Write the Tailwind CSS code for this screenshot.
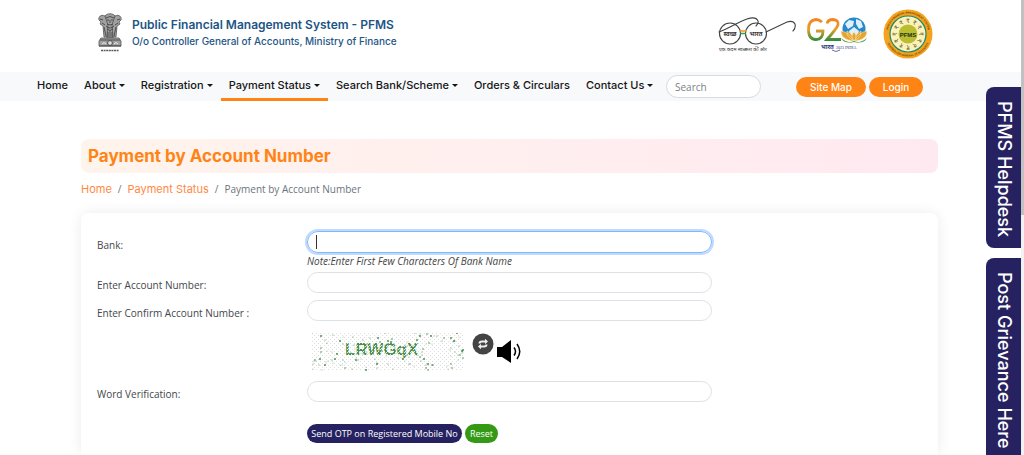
<!DOCTYPE html>
<html lang="en">
<head>
<meta charset="utf-8">
<meta name="viewport" content="width=device-width, initial-scale=1">
<title>PFMS - Payment by Account Number</title>
<script src="https://cdn.jsdelivr.net/npm/@tailwindcss/browser@4"></script>
</head>
<body class="relative flex h-screen flex-col overflow-hidden bg-white pr-[3px] font-['Open_Sans','Noto_Sans',sans-serif] text-[10px] leading-4 text-[#43474b]">

<header class="flex h-[72px] shrink-0 items-start justify-between pr-[88px] pl-[97px]">
  <div class="flex items-start gap-2 pt-[13px]">
    <svg class="h-[40px] w-[26px]" viewBox="0 0 26 40" role="img" aria-label="State Emblem of India">
      <g fill="#a0a0a0" stroke="#555" stroke-width=".8">
        <path d="M8 3c2-3 8-3 10 0l1 6-1 8-2 8h-6l-2-8-1-8z"/>
        <path d="M8 3C4 1 1 4 2 7l2 2-1 2 3 2 1 11h3l1-12z"/>
        <path d="M18 3c4-2 7 1 6 4l-2 2 1 2-3 2-1 11h-3l-1-12z"/>
        <path d="M4 25h18l2 3v5H2v-5z"/>
      </g>
      <g fill="none" stroke="#444" stroke-width=".9">
        <path d="M9 5q4-3 8 0M10 7h2M14 7h2M13 7v3M10 11q3 2 6 0M9 13q4 4 8 0M10 16q3 3 6 0M11 19v5M13 18v6M15 19v5M3 6l3 1M23 6l-3 1M5 10l3 2M21 10l-3 2M7 14l2 9M19 14l-2 9"/>
        <path d="M3 27h20M2 33h22"/>
      </g>
      <circle cx="13" cy="30" r="2.4" fill="#ddd" stroke="#333" stroke-width=".8"/>
      <path d="M5 31q2-3 4 0M17 31q2-3 4 0" fill="none" stroke="#eee" stroke-width="1"/>
      <path d="M4 37.500h18" stroke="#5a5a5a" stroke-width="1.600" stroke-dasharray="2 .6"/>
    </svg>
    <div class="pt-[4px] pl-px text-[#1d5586] font-[Inter,sans-serif]">
      <h1 class="text-[12px] leading-4 font-semibold whitespace-nowrap">Public Financial Management System - PFMS</h1>
      <p class="text-[10px] leading-4 font-medium whitespace-nowrap">O/o Controller General of Accounts, Ministry of Finance</p>
    </div>
  </div>
  <div class="flex items-start pt-[9px]">
    <svg class="h-[50px] w-[80px]" viewBox="0 0 80 50" role="img" aria-label="Swachh Bharat">
      <g fill="none" stroke="#424242" stroke-width="1.100" stroke-linecap="round">
        <circle cx="12" cy="24.500" r="10.500"/><circle cx="38" cy="24.500" r="10.500"/>
        <path d="M1 23C12 19 20 13 29 10Q38 7 40 12Q41 14 38 17M48 23L69 13Q75 11 77 15Q78 19 75 22"/>
      </g>
      <path d="M22 22h6" stroke="#f7931e" stroke-width="1.500"/><path d="M22 24.500h6" stroke="#2f9e44" stroke-width="1.500"/>
      <g fill="#333" font-family="Noto Sans, Noto Sans Devanagari, sans-serif" font-weight="700" text-anchor="middle">
        <text x="12" y="27" font-size="6">स्वच्छ</text><text x="38" y="27" font-size="6">भारत</text>
        <text x="25" y="42" font-size="5" font-weight="400">एक कदम स्वच्छता की ओर</text>
      </g>
    </svg>
    <svg class="ml-[8px] h-[50px] w-[64px]" viewBox="0 0 64 50" role="img" aria-label="G20 Bharat 2023 India">
      <defs>
        <linearGradient id="tri" gradientUnits="userSpaceOnUse" x1="0" x2="0" y1="9" y2="32"><stop offset="0" stop-color="#f58220"/><stop offset=".5" stop-color="#e5a02b"/><stop offset="1" stop-color="#258b3d"/></linearGradient>
      </defs>
      <path d="M16 13Q13 10.500 10 10.500Q2.500 11 2.500 20.500Q2.500 30.500 10 30.500Q17 30.500 17 22H10M21 14.500Q22 10.500 27 10.500Q33 11 32 16Q31 19 21 30.500H35" fill="none" stroke="url(#tri)" stroke-width="2.800"/>
      <circle cx="48" cy="20" r="11.500" fill="#2587cc"/>
      <path d="M39 15l4-4 5 1-1 5-5 3zM50 10l5 2 2 6-4 2-3-5zM43 22l5-4 5 4-3 7h-5z" fill="#e0f0fa"/>
      <g fill="#e6a32e" stroke="#fff3c4" stroke-width=".5">
        <path d="M48 32Q35 31 35 22Q43 23 48 32M48 32Q61 31 61 22Q53 23 48 32M48 32Q40 28 41 22Q47 25 48 32M48 32Q56 28 55 22Q49 25 48 32"/>
        <path d="M48 32Q44 27 48 23Q52 27 48 32"/>
      </g>
      <path d="M35 29q7 6 13 3q6 3 13-3q-3 6-13 4q-10 2-13-4" fill="#3f9945"/>
      <text x="15" y="40" font-family="Noto Sans, Noto Sans Devanagari, sans-serif" font-size="6" font-weight="700" fill="#28347c">भारत</text>
      <text x="30" y="40" font-family="Liberation Serif, serif" font-size="4" fill="#28347c">2023 INDIA</text>
      <path d="M26 41q4 3 8 0" fill="none" stroke="#28347c" stroke-width=".7"/>
    </svg>
    <svg class="ml-[13px] h-[50px] w-[50px]" viewBox="0 0 50 50" role="img" aria-label="PFMS seal">
      <defs><path id="arc-top" d="M4.500 25A20.500 20.500 0 0 1 45.500 25"/><path id="arc-bottom" d="M2.500 25A22.500 22.500 0 0 0 47.500 25"/></defs>
      <circle cx="25" cy="25" r="24.500" fill="#f6a21c"/>
      <circle cx="25" cy="25" r="18" fill="#fcf3bb" stroke="#168b72" stroke-width="1.200"/>
      <g font-family="Liberation Sans, sans-serif" font-size="2.600" font-weight="700" fill="#5a400f" text-anchor="middle">
        <text><textPath href="#arc-top" startOffset="50%">PUBLIC FINANCIAL MANAGEMENT SYSTEM</textPath></text>
        <text><textPath href="#arc-bottom" startOffset="50%">CONTROLLER GENERAL OF ACCOUNTS</textPath></text>
      </g>
      <g id="rupees" fill="#5e5626" font-family="DejaVu Sans, sans-serif" font-size="6" text-anchor="middle"></g>
      <circle cx="25" cy="25" r="9.500" fill="#b9bd2f"/>
      <text x="25" y="27.500" font-family="Liberation Sans, sans-serif" font-size="6" font-weight="700" text-anchor="middle" fill="#25301a">PFMS</text>
    </svg>
  </div>
</header>

<nav class="flex h-[29px] shrink-0 items-center bg-[#f7f9fb] pr-[98px] pl-[29px] font-[Inter,sans-serif]" aria-label="Main">
  <ul class="flex h-full text-[11px] leading-[26px] font-medium whitespace-nowrap text-[#161616]">
    <li><a class="block h-full px-2" href="#">Home</a></li>
    <li><a class="flex h-full items-center gap-[3px] border-b-[3px] border-transparent px-2" href="#">About <i class="border-x-[3px] border-t-[3px] border-x-transparent border-t-[#161616]"></i></a></li>
    <li><a class="flex h-full items-center gap-[3px] border-b-[3px] border-transparent px-2" href="#">Registration <i class="border-x-[3px] border-t-[3px] border-x-transparent border-t-[#161616]"></i></a></li>
    <li><a class="flex h-full items-center gap-[3px] border-b-[3px] border-[#ff8416] px-2" href="#" aria-current="page">Payment Status <i class="border-x-[3px] border-t-[3px] border-x-transparent border-t-[#161616]"></i></a></li>
    <li><a class="flex h-full items-center gap-[3px] border-b-[3px] border-transparent px-2" href="#">Search Bank/Scheme <i class="border-x-[3px] border-t-[3px] border-x-transparent border-t-[#161616]"></i></a></li>
    <li><a class="block h-full px-2" href="#">Orders &amp; Circulars</a></li>
    <li><a class="flex h-full items-center gap-[3px] border-b-[3px] border-transparent px-2" href="#">Contact Us <i class="border-x-[3px] border-t-[3px] border-x-transparent border-t-[#161616]"></i></a></li>
  </ul>
  <div class="ml-auto flex items-center">
    <input class="h-[23px] w-[95px] rounded-full border border-[#d5dbe1] bg-white px-2 font-['Open_Sans',sans-serif] text-[10px] placeholder:text-[#7b8289]" type="search" aria-label="Search" placeholder="Search">
    <button class="ml-[35px] h-5 w-[70px] rounded-full bg-[#ff8416] text-[10px] leading-4 font-medium text-white">Site Map</button>
    <button class="ml-[3px] h-5 w-[54px] rounded-full bg-[#ff8416] text-[10px] leading-4 font-medium text-white">Login</button>
  </div>
</nav>

<main class="flex min-h-0 flex-1 flex-col pt-[38px] pr-[83px] pl-[81px]">
  <h2 class="h-[34px] shrink-0 rounded-lg bg-linear-to-r from-[#fff4ec] to-[#ffe9f1] px-[7px] font-[Inter,sans-serif] text-[17px] leading-[34px] font-bold text-[#ff8416]">Payment by Account Number</h2>
  <nav class="mt-2 flex gap-[6px] leading-4 text-[#6c757d]" aria-label="Breadcrumb">
    <a class="font-[Inter,sans-serif] text-[11px] text-[#ff8844]" href="#">Home</a><span>/</span>
    <a class="font-[Inter,sans-serif] text-[11px] text-[#ff8844]" href="#">Payment Status</a><span>/</span>
    <span aria-current="page">Payment by Account Number</span>
  </nav>

  <form class="mt-[16px] grid flex-1 grid-cols-[210px_minmax(0,405px)] content-start rounded-t-lg bg-white px-4 pt-[18px] shadow-[0_0_14px_rgba(0,0,0,0.08)]">
    <label class="pt-[6px]" for="bank">Bank:</label>
    <div class="relative h-[41px]">
      <input id="bank" class="block h-[22px] w-full rounded-full border border-[#80b5ff] px-2 text-[14px] caret-transparent ring-2 ring-[#bfdaff] outline-none" type="text" autofocus>
      <span class="absolute top-1 left-[9px] h-[14px] w-px bg-[#333]" aria-hidden="true"></span>
      <p class="leading-4 text-[#454545] italic">Note:Enter First Few Characters Of Bank Name</p>
    </div>
    <label class="pt-[5px]" for="account">Enter Account Number:</label>
    <div class="h-7"><input id="account" class="block h-[21px] w-full rounded-full border border-[#dde1e6] px-2 outline-none" type="text"></div>
    <label class="pt-[5px]" for="confirm">Enter Confirm Account Number :</label>
    <div class="h-[33px]"><input id="confirm" class="block h-[21px] w-full rounded-full border border-[#dde1e6] px-2 outline-none" type="text"></div>
    <div class="col-start-2 flex h-[48px] items-start pl-[5px]">
      <svg class="h-[38px] w-[152px]" viewBox="0 0 152 38" role="img" aria-label="Captcha LRWGqX">
        <defs><pattern id="mesh" width="4" height="4" patternUnits="userSpaceOnUse"><path d="M0 0h1v1H0zM2 2h1v1H2z" fill="#dedede"/></pattern>
        <pattern id="hatch" width="3" height="3" patternUnits="userSpaceOnUse"><rect width="3" height="3" fill="#4b8d4e"/><path d="M0 0h1v1H0zM2 1h1v1H2z" fill="#dcebdc"/></pattern></defs>
        <rect width="152" height="38" fill="url(#mesh)"/>
        <g id="specks" fill="#2e7d32"></g>
        <text x="33" y="22" font-family="Liberation Sans, sans-serif" font-size="17" font-weight="700" fill="url(#hatch)">LRWGqX</text>
      </svg>
      <button class="ml-2 h-[22px] w-[22px]" type="button" aria-label="Refresh captcha">
        <svg viewBox="0 0 22 22"><circle cx="11" cy="11" r="10.500" fill="#444"/><path d="M14.500 8.500H10Q7.500 8.500 7.500 10.500M7.500 13.500h4.500Q14.500 13.500 14.500 11.500" fill="none" stroke="#eee" stroke-width="2"/><path d="M13 5.800l3 2.700-3 2.700zM9 10.800l-3 2.700 3 2.700z" fill="#eee"/></svg>
      </button>
      <button class="mt-[7px] ml-[2px] h-6 w-[26px]" type="button" aria-label="Play captcha audio">
        <svg viewBox="0 0 26 24"><path d="M1 7h5l9-7v23l-9-6H1z" fill="#000"/><path d="M18 7.500q3 4 0 8M21 4q5.500 7.500 0 15" fill="none" stroke="#000" stroke-width="1.500"/></svg>
      </button>
    </div>
    <label class="pt-[5px]" for="word">Word Verification:</label>
    <div class="h-[42px]"><input id="word" class="block h-[21px] w-full rounded-full border border-[#dde1e6] px-2 outline-none" type="text"></div>
    <div class="col-start-2 flex gap-[3px] pt-px text-white">
      <button class="h-[19px] w-[155px] rounded-full bg-[#262261] text-[9px] leading-4 whitespace-nowrap" type="button">Send OTP on Registered Mobile No</button>
      <button class="h-[19px] w-[33px] rounded-full bg-[#349914] text-[9px] leading-4" type="reset">Reset</button>
    </div>
  </form>
</main>

<aside class="absolute top-[87px] right-[3px] bottom-0 flex flex-col gap-[10px] font-[Inter,sans-serif] text-[18px] leading-[34px] font-medium whitespace-nowrap text-white" aria-label="Help">
  <a class="h-[161px] w-[35px] shrink-0 rounded-l-lg bg-[#262261] pt-[14px] [writing-mode:vertical-rl]" href="#">PFMS Helpdesk</a>
  <a class="w-[35px] flex-1 rounded-tl-lg bg-[#262261] pt-[14px] [writing-mode:vertical-rl]" href="#">Post Grievance Here</a>
</aside>
<div class="absolute inset-y-0 right-0 w-[3px] bg-[#f1f1f1]" aria-hidden="true"><div class="h-[215px] bg-[#c1c1c1]"></div></div>

<script>
const ns = 'http://www.w3.org/2000/svg';
const ring = document.getElementById('rupees');
for (let a = 0; a < 360; a += 30) {
  const t = document.createElementNS(ns, 'text');
  t.setAttribute('x', 25); t.setAttribute('y', 14);
  t.setAttribute('transform', `rotate(${a} 25 25)`);
  t.textContent = '₹';
  ring.append(t);
}
const specks = document.getElementById('specks');
let seed = 29;
const next = n => (seed = (seed * 16807) % 2147483647) % n;
for (let i = 0; i < 135; i++) {
  const c = document.createElementNS(ns, 'circle');
  c.setAttribute('cx', next(152)); c.setAttribute('cy', next(38));
  c.setAttribute('r', i % 3 ? 0.6 : 1);
  c.setAttribute('opacity', i % 2 ? 0.5 : 0.85);
  specks.append(c);
}
document.getElementById('bank').focus();
</script>
</body>
</html>
